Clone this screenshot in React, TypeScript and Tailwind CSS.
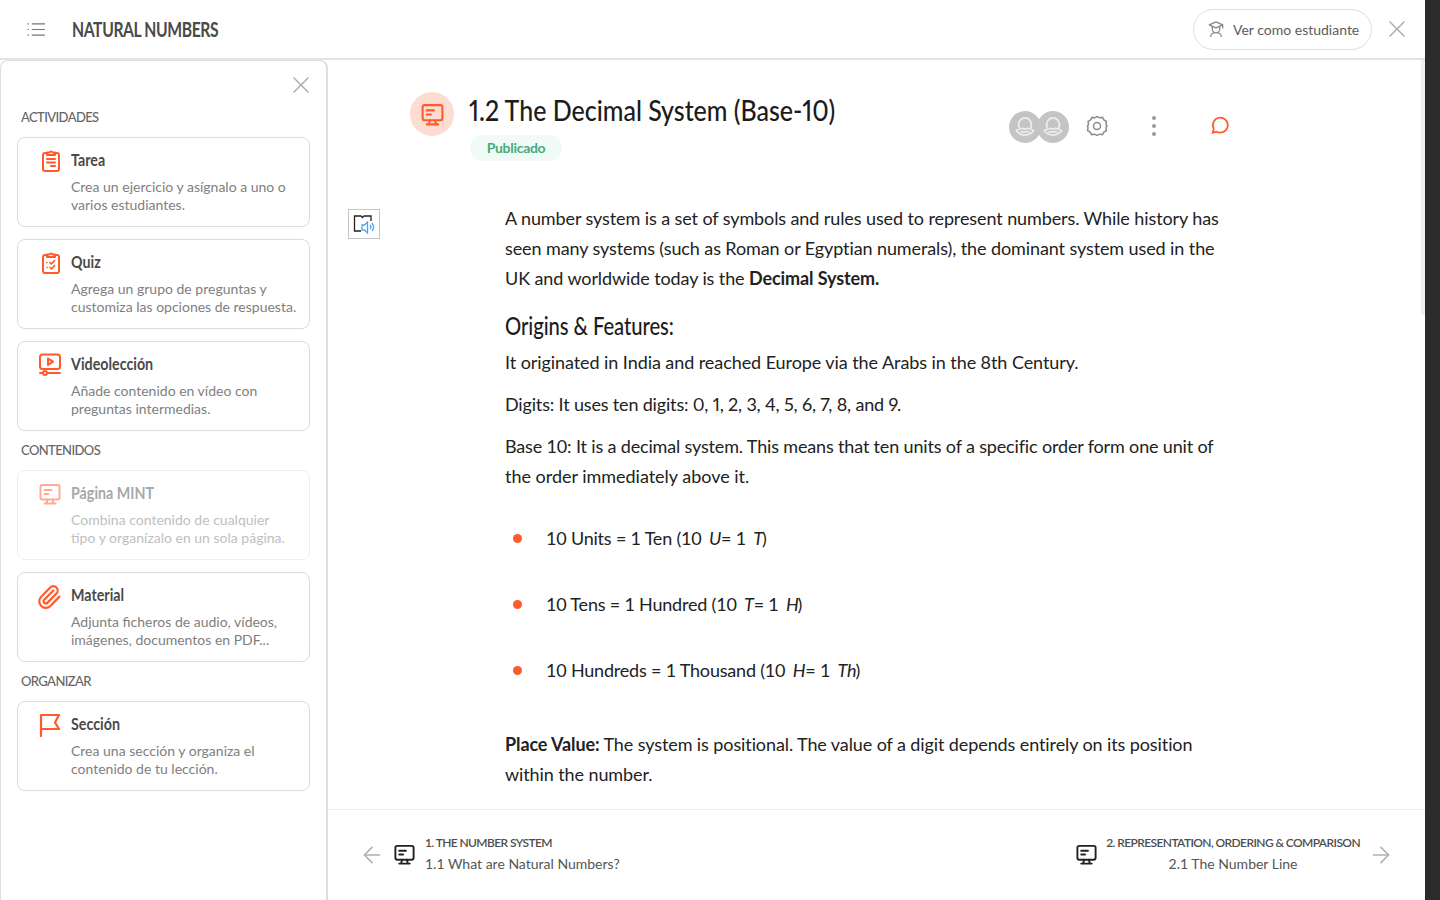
import { ArrowLeft, ArrowRight, Paperclip } from "lucide-react";
import type { ReactNode } from "react";

const lato = "font-['Lato','Noto_Sans',sans-serif]";

function Cross({ className = "" }: { className?: string }) {
  return (
    <svg viewBox="0 0 16 16" fill="none" stroke="#a8a8a8" strokeWidth="1.4" strokeLinecap="round" className={className}>
      <path d="M1 1l14 14M15 1L1 15" />
    </svg>
  );
}

function Screen({ className = "", color = "#ff5a2c" }: { className?: string; color?: string }) {
  return (
    <svg viewBox="0 0 24 24" fill="none" stroke={color} strokeWidth="2" strokeLinecap="round" strokeLinejoin="round" className={className}>
      <rect x="2.5" y="3" width="19" height="14.5" rx="2" />
      <path d="M6.5 8h7M6.5 12h4M9.500 17.500l-1 4M14.500 17.500l1 4M6.500 21.500h11" />
    </svg>
  );
}

function Clipboard() {
  return (
    <svg viewBox="0 0 24 24" fill="none" stroke="#ff5a2c" strokeWidth="2" strokeLinecap="round" strokeLinejoin="round" className="w-[24px] h-[24px]">
      <path d="M8 4H6a2 2 0 0 0-2 2v14a2 2 0 0 0 2 2h12a2 2 0 0 0 2-2V6a2 2 0 0 0-2-2h-2" />
      <path d="M8 6V3.500h2.500a1.600 1.600 0 0 1 3 0H16V6zM8 10h8M8 13.500h8M12 17h4" />
    </svg>
  );
}

function QuizIcon() {
  return (
    <svg viewBox="0 0 24 24" fill="none" stroke="#ff5a2c" strokeWidth="2" strokeLinecap="round" strokeLinejoin="round" className="w-[24px] h-[24px]">
      <path d="M8 4H6a2 2 0 0 0-2 2v14a2 2 0 0 0 2 2h12a2 2 0 0 0 2-2V6a2 2 0 0 0-2-2h-2" />
      <path d="M8 6V3.500h2.500a1.600 1.600 0 0 1 3 0H16V6z" />
      <path strokeWidth="1.700" d="M8 11.500h.01M8 16.500h.01M11 11.500l1.500 1.500 3-3.500M11 16.500l1.500 1.500 3-3.500" />
    </svg>
  );
}

function VideoIcon() {
  return (
    <svg viewBox="0 0 24 24" fill="none" stroke="#ff5a2c" strokeWidth="2" strokeLinecap="round" strokeLinejoin="round" className="w-[24px] h-[24px] -ml-[1px]">
      <rect x="2" y="1.500" width="20" height="14.500" rx="2.500" />
      <path d="M10 5.500l5 3.200-5 3.200zM2 20h3M9 20h13" />
      <circle cx="7" cy="20" r="2" />
    </svg>
  );
}

function FlagIcon() {
  return (
    <svg viewBox="0 0 24 24" fill="none" stroke="#ff5a2c" strokeWidth="2.200" strokeLinecap="round" strokeLinejoin="round" className="w-[24px] h-[24px] -ml-[1px]">
      <path d="M3 23V2h18l-4 7.500 4 6.500H3" />
    </svg>
  );
}

function Face() {
  return (
    <div className="w-[32px] h-[32px] rounded-full bg-[#c4c4c4] flex items-center justify-center -ml-[4px] first:ml-0">
      <svg viewBox="0 0 24 24" fill="none" stroke="#ececec" strokeWidth="1.600" strokeLinecap="round" strokeLinejoin="round" className="w-[26px] h-[26px]">
        <path d="M6.500 12.500c-1.500-4.500 1.500-9 5.500-9s7 4.500 5.500 9" />
        <path d="M4 15.500c2.500-2 5.500-3 8-1.500 2.500-1.500 5.500-.5 8 1.500-2 2.500-4.500 4-8 4s-6-1.500-8-4z" />
        <path d="M8.500 16.500h7" />
      </svg>
    </div>
  );
}

function SectionLabel({ children }: { children: ReactNode }) {
  return <p className="pl-[20px] h-[39px] pt-[10px] text-[13px] leading-[18px] font-medium text-[#666] tracking-[-0.6px]">{children}</p>;
}

function Card({ icon, title, text, faded }: { icon: ReactNode; title: string; text: ReactNode; faded?: boolean }) {
  return (
    <div className={`mx-[16px] h-[90px] rounded-[8px] border flex ${faded ? "border-[#eeeeee]" : "border-[#dcdcdc]"}`}>
      <div className={`w-[53px] shrink-0 pt-[11px] pl-[21px] ${faded ? "opacity-50" : ""}`}>{icon}</div>
      <div className="pt-[11px]">
        <p className={`origin-left scale-x-[0.84] text-[17px] leading-[22px] font-bold ${faded ? "text-[#a8a8a8]" : "text-[#4a4a4a]"}`}>{title}</p>
        <p className={`mt-[7px] text-[14px] leading-[18px] ${faded ? "text-[#c0c0c0]" : "text-[#808080]"}`}>{text}</p>
      </div>
    </div>
  );
}

function Bullet({ children }: { children: ReactNode }) {
  return (
    <li className="h-[66px] flex items-center tracking-[-0.2px]">
      <span className="w-[9px] h-[9px] rounded-full bg-[#ff5a2c] ml-[8px] mr-[24px] shrink-0" />
      <span>{children}</span>
    </li>
  );
}

export default function App() {
  return (
    <div className={`${lato} w-[1440px] h-[900px] overflow-hidden flex bg-white`}>
      <div className="w-[1425px] h-full flex flex-col">
        {/* top bar */}
        <header className="h-[60px] shrink-0 border-b-2 border-[#e4e4e4] flex items-center pl-[27px] pr-[20px]">
          <svg viewBox="0 0 20 16" fill="none" stroke="#777" strokeWidth="1.3" className="w-[19px] h-[15px]">
            <path d="M5 2h14M5 8h14M5 14h14" />
            <path d="M.5 2h1.500M.5 8h1.500M.5 14h1.500" />
          </svg>
          <h1 className="ml-[26px] origin-left scale-x-[0.785] text-[20px] font-bold tracking-[-0.5px] text-[#4a4a4a]">NATURAL NUMBERS</h1>
          <button className="ml-auto h-[41px] w-[179px] rounded-full border border-[#dedede] flex items-center pl-[13px] text-[14px] text-[#5c5c5c]">
            <svg viewBox="0 0 24 24" fill="none" stroke="#8a8478" strokeWidth="1.6" strokeLinecap="round" strokeLinejoin="round" className="w-[18px] h-[18px] mr-[8px]">
              <path d="M12 2.500L3 6.500l9 4 9-4zM7 9v3a5 5 0 0 0 10 0V9M21 6.500v4M5 22c0-3.500 3-5 7-5s7 1.500 7 5" />
            </svg>
            <span className="pt-[1px]">Ver como estudiante</span>
          </button>
          <Cross className="ml-[17px] w-[16px] h-[16px]" />
        </header>

        <div className="flex-1 flex min-h-0">
          {/* activity panel */}
          <aside className="w-[328px] shrink-0 h-full rounded-t-[8px] border-x border-t border-[#dedede] border-r-2">
            <div className="h-[37px] flex justify-end items-end pr-[17px] pb-[5px]">
              <Cross className="w-[16px] h-[16px]" />
            </div>
            <SectionLabel>ACTIVIDADES</SectionLabel>
            <div className="flex flex-col gap-[12px]">
              <Card icon={<Clipboard />} title="Tarea" text={<>Crea un ejercicio y asígnalo a uno o<br />varios estudiantes.</>} />
              <Card icon={<QuizIcon />} title="Quiz" text={<>Agrega un grupo de preguntas y<br />customiza las opciones de respuesta.</>} />
              <Card icon={<VideoIcon />} title="Videolección" text={<>Añade contenido en vídeo con<br />preguntas intermedias.</>} />
            </div>
            <SectionLabel>CONTENIDOS</SectionLabel>
            <div className="flex flex-col gap-[12px]">
              <Card faded icon={<Screen className="w-[24px] h-[24px] -ml-[1px]" />} title="Página MINT" text={<>Combina contenido de cualquier<br />tipo y organízalo en un sola página.</>} />
              <Card icon={<Paperclip className="w-[26px] h-[26px] -ml-[3px] text-[#ff5a2c]" strokeWidth={2} />} title="Material" text={<>Adjunta ficheros de audio, vídeos,<br />imágenes, documentos en PDF...</>} />
            </div>
            <SectionLabel>ORGANIZAR</SectionLabel>
            <Card icon={<FlagIcon />} title="Sección" text={<>Crea una sección y organiza el<br />contenido de tu lección.</>} />
          </aside>

          {/* lesson */}
          <main className="flex-1 min-w-0 flex flex-col">
            <div className="flex-1 min-h-0 flex">
              <div className="flex-1 min-w-0 overflow-hidden">
                <div className="flex items-start pl-[82px] pr-[191px] pt-[32px] h-[143px]">
                  <div className="w-[44px] h-[44px] rounded-full bg-[#fddcd2] flex items-center justify-center shrink-0">
                    <Screen className="w-[25px] h-[25px]" />
                  </div>
                  <div className="ml-[15px]">
                    <h2 className="origin-left scale-x-[0.861] proportional-nums text-[29px] leading-[36px] font-medium whitespace-nowrap text-[#1c1c1c]">1.2 The Decimal System (Base-10)</h2>
                    <span className="block w-[92px] ml-[1px] mt-[7px] h-[26px] leading-[26px] text-center rounded-full bg-[#f0fbf6] text-[14px] font-bold tracking-[-0.3px] text-[#45aa7c]">Publicado</span>
                  </div>
                  <div className="ml-auto mt-[19px] flex items-center h-[32px]">
                    <div className="flex">
                      <Face />
                      <Face />
                    </div>
                    <svg viewBox="0 0 24 24" fill="none" stroke="#8c8c8c" strokeWidth="1.5" className="ml-[16px] w-[24px] h-[24px] -mt-[2px]">
                      <path d="M12 2.500l2.600 1.300 2.900-.4 1.400 2.500 2.500 1.500-.4 2.900 1 1.700-1 1.700.4 2.900-2.500 1.500-1.400 2.500-2.900-.4L12 21.500l-2.600-1.300-2.900.4-1.400-2.500-2.500-1.500.4-2.900L2.500 12l1-1.700-.4-2.900 2.500-1.500 1.400-2.500 2.900.4z" />
                      <circle cx="12" cy="12" r="3.500" />
                    </svg>
                    <div className="ml-[33px] w-[24px] flex flex-col items-center gap-[4px] -mt-[2px]">
                      <span className="w-[4px] h-[4px] rounded-full bg-[#999]" />
                      <span className="w-[4px] h-[4px] rounded-full bg-[#999]" />
                      <span className="w-[4px] h-[4px] rounded-full bg-[#999]" />
                    </div>
                    <svg viewBox="0 0 24 24" fill="none" stroke="#ff5a2c" strokeWidth="2" strokeLinejoin="round" className="ml-[44px] w-[20px] h-[20px] -mt-[4px]">
                      <path d="M3 21.500l1.500-5A9 9 0 1 1 8 20z" />
                    </svg>
                  </div>
                </div>

                <div className="flex pl-[20px]">
                  <div className="w-[32px] h-[30px] border border-[#c4c4c4] flex items-center justify-center shrink-0 mt-[6px]">
                    <svg viewBox="0 0 24 24" fill="none" strokeWidth="1.300" className="w-[24px] h-[24px]">
                      <path d="M9 19H2.500V4h6.500l1.500 1.500L12 4h7v5" stroke="#222" />
                      <path d="M10 13h2.500l3-3v11l-3-3H10zM18 13c1 1.200 1 3 0 4M20 11c2 2.500 2 6 0 8" stroke="#4ea6f2" />
                    </svg>
                  </div>
                  <article className="ml-[125px] w-[722px] text-[18px] leading-[30px] text-[#222] tracking-[-0.1px]">
                    <p>A number system is a set of symbols and rules used to represent numbers. While history has seen many systems (such as Roman or Egyptian numerals), the dominant system used in the UK and worldwide today is the <strong className="font-bold">Decimal System.</strong></p>
                    <h3 className="mt-[17px] origin-left scale-x-[0.81] text-[25px] leading-[30px] font-medium text-[#1c1c1c]">Origins &amp; Features:</h3>
                    <p className="mt-[7px] tracking-[-0.07px]">It originated in India and reached Europe via the Arabs in the 8th Century.</p>
                    <p className="mt-[12px] proportional-nums tracking-[-0.165px]">Digits: It uses ten digits: 0, 1, 2, 3, 4, 5, 6, 7, 8, and 9.</p>
                    <p className="mt-[12px]"><span className="tracking-[-0.16px]">Base 10: It is a decimal system. This means that ten units of a specific order form one unit of</span> <span className="tracking-[-0.02px]">the order immediately above it.</span></p>
                    <ul className="mt-[14px]">
                      <Bullet>10 Units = 1 Ten (10 <i className="ml-[3px]">U</i>= 1 <i className="ml-[3px] -mr-[1px]">T</i>)</Bullet>
                      <Bullet>10 Tens = 1 Hundred (10 <i className="ml-[3px]">T</i>= 1 <i className="ml-[3px] -mr-[1px]">H</i>)</Bullet>
                      <Bullet>10 Hundreds = 1 Thousand (10 <i className="ml-[3px]">H</i>= 1 <i className="ml-[3px] -mr-[1px]">Th</i>)</Bullet>
                    </ul>
                    <p className="mt-[26px]"><strong className="font-bold">Place Value:</strong> The system is positional. The value of a digit depends entirely on its position within the number.</p>
                  </article>
                </div>
              </div>
              {/* scrollbar */}
              <div className="w-[4px] shrink-0">
                <div className="h-[255px] bg-[#f0f0f0]" />
              </div>
            </div>

            {/* prev / next */}
            <footer className="h-[91px] shrink-0 border-t border-[#ececec] flex items-center pl-[31px] pr-[31px] pb-[3px]">
              <ArrowLeft className="w-[26px] h-[26px] mt-[2px] text-[#b0b0b0]" strokeWidth={1.5} />
              <Screen color="#222" className="ml-[8px] w-[23px] h-[23px] mt-[1px]" />
              <div className="ml-[9px] text-left">
                <p className="text-[12px] leading-[18px] font-semibold tracking-[-0.6px] text-[#4d4d4d]">1. THE NUMBER SYSTEM</p>
                <p className="mt-[2px] text-[14px] leading-[20px] text-[#555]">1.1 What are Natural Numbers?</p>
              </div>
              <Screen color="#222" className="ml-auto w-[23px] h-[23px] mt-[1px]" />
              <div className="ml-[8px] text-center">
                <p className="text-[12px] leading-[18px] font-semibold tracking-[-0.6px] text-[#4d4d4d]">2. REPRESENTATION, ORDERING &amp; COMPARISON</p>
                <p className="mt-[2px] text-[14px] leading-[20px] text-[#555]">2.1 The Number Line</p>
              </div>
              <ArrowRight className="ml-[8px] w-[26px] h-[26px] mt-[2px] text-[#b0b0b0]" strokeWidth={1.5} />
            </footer>
          </main>
        </div>
      </div>
      <div className="w-[15px] h-full bg-[#2b2b2b]" />
    </div>
  );
}
